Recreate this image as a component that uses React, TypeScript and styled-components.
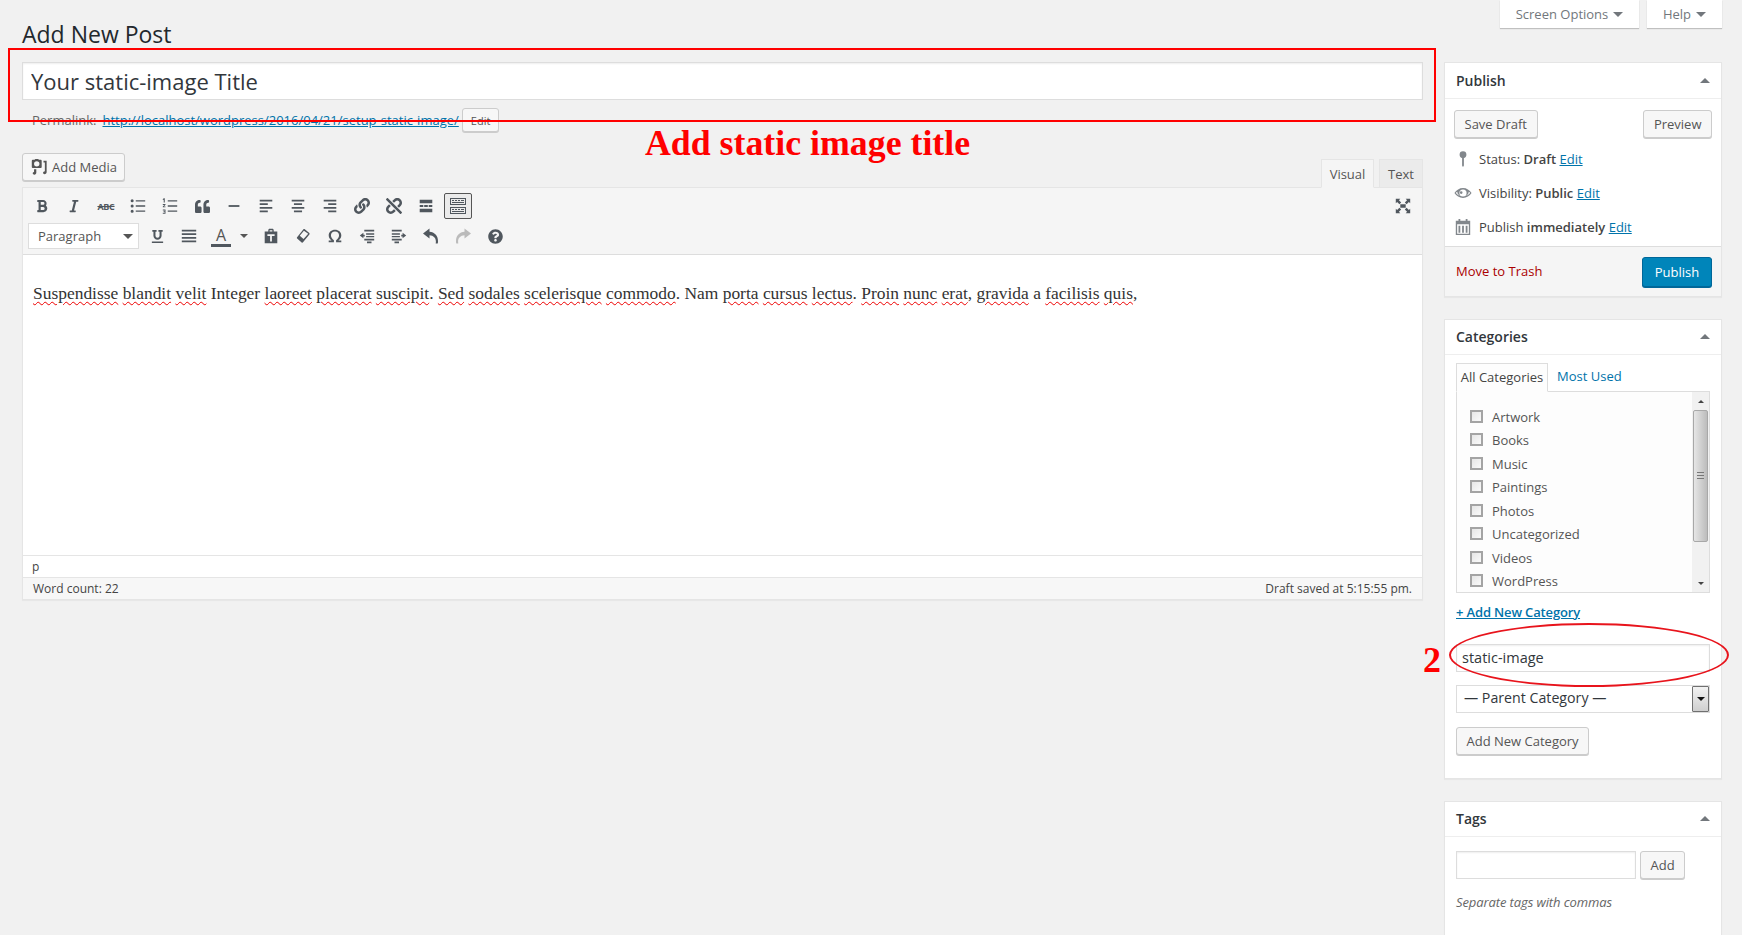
import React from "react";
import styled, { createGlobalStyle } from "styled-components";
import {
  FaBold,
  FaItalic,
  FaQuoteLeft,
  FaLink,
  FaUnlink,
  FaUnderline,
  FaQuestionCircle,
} from "react-icons/fa";

// global
const GlobalStyle = createGlobalStyle`
  html, body {
    margin: 0;
    padding: 0;
    background: #f1f1f1;
    overflow: hidden;
  }
  * {
    box-sizing: border-box;
  }
`;

// page
const Page = styled.div`
  position: relative;
  width: 1742px;
  height: 935px;
  overflow: hidden;
  font-family: "Open Sans", sans-serif;
  font-size: 13px;
  color: #444;
`;

const ScreenMeta = styled.div`
  display: flex;
  justify-content: flex-end;
  gap: 8px;
  height: 28px;
  padding-right: 20px;
`;

const MetaTab = styled.div<{ $width: number }>`
  display: flex;
  align-items: center;
  justify-content: center;
  gap: 5px;
  width: ${(p) => p.$width}px;
  height: 28px;
  background: #fff;
  box-shadow: 0 1px 1px rgba(0, 0, 0, 0.2);
  color: #72777c;
`;

const Caret = styled.span<{ $up?: boolean; $size?: number; $color?: string }>`
  display: inline-block;
  width: 0;
  height: 0;
  border-left: ${(p) => p.$size ?? 5}px solid transparent;
  border-right: ${(p) => p.$size ?? 5}px solid transparent;
  ${(p) => (p.$up ? "border-bottom" : "border-top")}: ${(p) => p.$size ?? 5}px solid
    ${(p) => p.$color ?? "#72777c"};
`;

const Columns = styled.div`
  display: flex;
  gap: 21px;
  padding: 0 20px 0 22px;
`;

const Main = styled.div`
  width: 1401px;
`;

const Heading = styled.h1`
  margin: -8px 0 0;
  height: 42px;
  font-size: 23px;
  font-weight: 400;
  line-height: 29px;
  color: #23282d;
`;

const TitleInput = styled.input`
  display: block;
  width: 100%;
  height: 38px;
  padding: 3px 8px;
  border: 1px solid #ddd;
  outline: 0;
  background: #fff;
  font-family: "Open Sans", sans-serif;
  font-size: 22px;
  color: #32373c;
  box-shadow: inset 0 1px 2px rgba(0, 0, 0, 0.07);
`;

const PermalinkRow = styled.div`
  display: flex;
  align-items: center;
  gap: 3px;
  height: 24px;
  margin-top: 8px;
  padding-left: 10px;
  color: #666;
`;

const PermalinkUrl = styled.a`
  margin-left: 3px;
  color: #0073aa;
  text-decoration: underline;
`;

const TextLink = styled.a<{ $semi?: boolean }>`
  color: #0073aa;
  text-decoration: underline;
  font-weight: ${(p) => (p.$semi ? 600 : 400)};
  letter-spacing: ${(p) => (p.$semi ? "-0.15px" : "0")};
`;

const Strong = styled.span`
  font-weight: 600;
`;

const Button = styled.div<{ $small?: boolean }>`
  display: inline-flex;
  align-items: center;
  justify-content: center;
  gap: 5px;
  height: ${(p) => (p.$small ? 24 : 28)}px;
  padding: 0 ${(p) => (p.$small ? 8 : 9.5)}px;
  border: 1px solid #ccc;
  border-radius: 3px;
  background: #f7f7f7;
  box-shadow: 0 1px 0 #ccc;
  color: #555;
  font-size: ${(p) => (p.$small ? 11 : 13)}px;
  white-space: nowrap;
`;

const MediaButton = styled(Button)`
  gap: 4px;
  padding: 0 7px;
`;

const PrimaryButton = styled(Button)`
  height: 30px;
  width: 70px;
  border-color: #006799;
  background: #0085ba;
  box-shadow: 0 1px 0 #006799;
  color: #fff;
`;

const EditorBar = styled.div`
  display: flex;
  justify-content: space-between;
  align-items: flex-start;
  height: 34px;
  margin-top: 21px;
`;

const EditorTabs = styled.div`
  display: flex;
  gap: 5px;
  margin-top: 6px;
`;

const EditorTab = styled.div<{ $active?: boolean }>`
  display: flex;
  align-items: center;
  justify-content: center;
  width: ${(p) => (p.$active ? 53 : 44)}px;
  height: 29px;
  border: 1px solid #e5e5e5;
  border-bottom-color: ${(p) => (p.$active ? "#f5f5f5" : "#e5e5e5")};
  background: ${(p) => (p.$active ? "#f5f5f5" : "#ebebeb")};
  color: #555;
  position: relative;
  z-index: 1;
`;

const Editor = styled.div`
  border: 1px solid #e5e5e5;
  background: #fff;
  box-shadow: 0 1px 1px rgba(0, 0, 0, 0.04);
`;

const Toolbar = styled.div`
  display: flex;
  flex-direction: column;
  gap: 4px;
  height: 67px;
  padding: 5px 5px 0;
  border-bottom: 1px solid #ddd;
  background: #f5f5f5;
`;

const ToolRow = styled.div`
  display: flex;
  align-items: center;
  gap: 4px;
  height: 26px;
`;

const ToolButton = styled.div<{ $active?: boolean; $dim?: boolean }>`
  display: flex;
  align-items: center;
  justify-content: center;
  width: 28px;
  height: 26px;
  border: 1px solid ${(p) => (p.$active ? "#555" : "transparent")};
  border-radius: 2px;
  background: ${(p) => (p.$active ? "#ebebeb" : "transparent")};
  color: ${(p) => (p.$dim ? "#bbb" : "#50575e")};
`;

const SplitCaret = styled(ToolButton)`
  width: 18px;
  margin-left: -4px;
`;

const FullscreenButton = styled(ToolButton)`
  margin-left: auto;
`;

const StrikeLabel = styled.span`
  font-size: 9px;
  font-weight: 700;
  letter-spacing: -0.3px;
  text-decoration: line-through;
`;

const FormatSelect = styled.div`
  display: flex;
  align-items: center;
  justify-content: space-between;
  width: 111px;
  height: 26px;
  padding: 0 5px 0 9px;
  border: 1px solid #ddd;
  background: #fff;
  color: #555;
`;

const ColorLetter = styled.div`
  display: flex;
  flex-direction: column;
  align-items: center;
  width: 20px;
  font-size: 16px;
  font-weight: 400;
  line-height: 18px;
  color: #555;
  border-bottom: 3px solid #50575e;
`;

const Content = styled.div`
  height: 300px;
  padding: 25px 8px 0 10px;
  font-family: "Liberation Serif", serif;
  font-size: 17.45px;
  line-height: 27px;
  color: #333;
  white-space: nowrap;
`;

const Misspelled = styled.span`
  text-decoration: underline wavy #e00;
  text-decoration-thickness: 1px;
  text-underline-offset: 2px;
`;

const PathRow = styled.div`
  display: flex;
  align-items: center;
  height: 22px;
  padding-left: 9px;
  border-top: 1px solid #e5e5e5;
  font-size: 12px;
  color: #444;
`;

const StatusRow = styled.div`
  display: flex;
  align-items: center;
  justify-content: space-between;
  height: 22px;
  padding: 0 10px;
  border-top: 1px solid #e5e5e5;
  background: #f7f7f7;
  font-size: 12px;
  color: #444;
`;

// sidebar
const Side = styled.div`
  display: flex;
  flex-direction: column;
  gap: 22px;
  width: 278px;
  margin-top: 34px;
`;

const Box = styled.div`
  border: 1px solid #e5e5e5;
  background: #fff;
  box-shadow: 0 1px 1px rgba(0, 0, 0, 0.04);
`;

const BoxHeader = styled.div<{ $height?: number }>`
  display: flex;
  align-items: center;
  justify-content: space-between;
  height: ${(p) => p.$height ?? 35}px;
  padding: 0 11px 1px;
  border-bottom: 1px solid #eee;
  font-size: 14px;
  font-weight: 600;
  color: #32373c;
`;

const PublishActions = styled.div`
  display: flex;
  justify-content: space-between;
  padding: 11px 9px 0;
`;

const MetaList = styled.div`
  display: flex;
  flex-direction: column;
  padding-top: 4px;
`;

const MetaRow = styled.div`
  display: flex;
  align-items: center;
  gap: 7px;
  height: 34px;
  padding-left: 9px;
  white-space: nowrap;
`;

const MetaIcon = styled.span`
  display: flex;
  justify-content: center;
  width: 18px;
  color: #82878c;
`;

const BoxFooter = styled.div`
  display: flex;
  align-items: center;
  justify-content: space-between;
  height: 50px;
  margin-top: 2px;
  padding: 0 9px 0 11px;
  border-top: 1px solid #ddd;
  background: #f5f5f5;
`;

const TrashLink = styled.a`
  margin-top: -2px;
  color: #a00;
`;

const BoxBody = styled.div`
  padding: 8px 11px 0;
`;

const CategoryTabs = styled.div`
  display: flex;
  align-items: center;
  height: 28px;
  padding-bottom: 2px;
`;

const CategoryTab = styled.div`
  display: flex;
  align-items: center;
  justify-content: center;
  width: 92px;
  height: 29px;
  margin-bottom: -3px;
  padding-bottom: 2px;
  border: 1px solid #ddd;
  border-bottom-color: #fdfdfd;
  background: #fdfdfd;
  position: relative;
  z-index: 1;
`;

const PlainTab = styled.a`
  margin-left: 9px;
  color: #0073aa;
`;

const CategoryList = styled.div`
  display: flex;
  height: 202px;
  border: 1px solid #ddd;
  background: #fdfdfd;
`;

const Checklist = styled.div`
  flex: 1;
  padding: 13px 0 0 13px;
  overflow: hidden;
`;

const CheckRow = styled.label`
  display: flex;
  align-items: center;
  gap: 9px;
  height: 23.5px;
  color: #555;
`;

const CheckBox = styled.input`
  appearance: none;
  width: 13px;
  height: 13px;
  margin: 0 0 1px;
  border: 2px solid #a4a4a4;
  background: linear-gradient(135deg, #e6e6e6, #fafafa);
`;

const ScrollTrack = styled.div`
  display: flex;
  flex-direction: column;
  align-items: center;
  width: 17px;
  background: #f1f1f1;
`;

const ScrollArrow = styled.div`
  display: flex;
  align-items: center;
  justify-content: center;
  height: 18px;
`;

const ScrollThumb = styled.div`
  display: flex;
  align-items: center;
  justify-content: center;
  width: 15px;
  height: 132px;
  border: 1px solid #a8a8a8;
  border-radius: 2px;
  background: linear-gradient(90deg, #e6e6e6, #bcbcbc);
`;

const ScrollGrip = styled.div`
  width: 7px;
  height: 8px;
  background: repeating-linear-gradient(#777 0 1px, transparent 1px 3px);
`;

const ScrollSpacer = styled.div`
  flex: 1;
`;

const AddLinkRow = styled.div`
  margin-top: 10px;
  height: 18px;
  line-height: 18px;
`;

const TextField = styled.input<{ $width?: number }>`
  display: block;
  width: ${(p) => (p.$width ? `${p.$width}px` : "100%")};
  height: 28px;
  padding: 0 5px 2px;
  border: 1px solid #ddd;
  outline: 0;
  background: #fff;
  font-family: "Open Sans", sans-serif;
  font-size: 14.5px;
  color: #32373c;
  box-shadow: inset 0 1px 2px rgba(0, 0, 0, 0.07);
`;

const NewCategoryField = styled(TextField)`
  margin-top: 23px;
`;

const ParentSelect = styled.div`
  display: flex;
  align-items: center;
  justify-content: space-between;
  height: 28px;
  margin-top: 13px;
  padding-left: 7px;
  border: 1px solid #ddd;
  background: #fff;
  font-size: 14.2px;
  line-height: 22px;
  color: #32373c;
`;

const ParentLabel = styled.span`
  margin-top: -2px;
`;

const SelectArrow = styled.div`
  display: flex;
  align-items: center;
  justify-content: center;
  width: 17px;
  height: 26px;
  border: 1px solid #707070;
  border-radius: 1px;
  background: linear-gradient(#f2f2f2, #cfcfcf);
`;

const AddCategoryRow = styled.div`
  margin-top: 14px;
  height: 51px;
`;

const TagRow = styled.div`
  display: flex;
  gap: 4px;
  padding-top: 6px;
`;

const TagHint = styled.p`
  margin: 14px 0 0;
  height: 80px;
  font-style: italic;
  letter-spacing: -0.1px;
  color: #666;
`;

// annotations painted over the screenshot
const RedFrame = styled.div`
  position: absolute;
  left: 8px;
  top: 48px;
  width: 1428px;
  height: 74px;
  border: 2px solid #f00;
  pointer-events: none;
`;

const RedLabel = styled.div<{ $left: number; $top: number; $size: number }>`
  position: absolute;
  left: ${(p) => p.$left}px;
  top: ${(p) => p.$top}px;
  font-family: "Liberation Serif", serif;
  font-size: ${(p) => p.$size}px;
  font-weight: 700;
  line-height: 1;
  color: #f00;
  white-space: nowrap;
`;

const RedEllipse = styled.div`
  position: absolute;
  left: 1449px;
  top: 623px;
  width: 280px;
  height: 64px;
  border: 2px solid #e8141c;
  border-radius: 50%;
  pointer-events: none;
`;

// drawn icons
type GlyphProps = { size?: number; flip?: boolean; children: React.ReactNode };

const Glyph = ({ size = 18, flip, children }: GlyphProps) => (
  <svg
    width={size}
    height={size}
    viewBox="0 0 20 20"
    fill="currentColor"
    fillRule="evenodd"
    style={flip ? { transform: "scaleX(-1)" } : undefined}
  >
    {children}
  </svg>
);

const BulletList = () => (
  <Glyph>
    <path d="M3.500 2.500a1.700 1.700 0 110 3.400 1.700 1.700 0 010-3.400zM3.500 8.300a1.700 1.700 0 110 3.400 1.700 1.700 0 010-3.400zM3.500 14.100a1.700 1.700 0 110 3.400 1.700 1.700 0 010-3.400zM7.500 3.500H18V5H7.500zM7.500 9.300H18v1.500H7.500zM7.500 15H18v1.500H7.500z" />
  </Glyph>
);
const NumberList = () => (
  <Glyph>
    <path d="M3 1.500h1.200v4.500H3V3L2 3.300V2.400zM2 7.800h3v.9L3.300 10.500H5v1H2v-.9L3.700 8.800H2zM2 14h3v4.500H2v-1h2v-.8H2.800v-.9H4V15H2zM7.500 3.500H18V5H7.500zM7.500 9.300H18v1.500H7.500zM7.500 15H18v1.500H7.500z" />
  </Glyph>
);
const AlignLeft = () => (
  <Glyph>
    <path d="M3 3h14v2H3zM3 7h9v2H3zM3 11h14v2H3zM3 15h9v2H3z" />
  </Glyph>
);
const AlignCenter = () => (
  <Glyph>
    <path d="M3 3h14v2H3zM5.500 7h9v2h-9zM3 11h14v2H3zM5.500 15h9v2h-9z" />
  </Glyph>
);
const AlignRight = () => (
  <Glyph>
    <path d="M3 3h14v2H3zM8 7h9v2H8zM3 11h14v2H3zM8 15h9v2H8z" />
  </Glyph>
);
const Justify = () => (
  <Glyph>
    <path d="M2 3h16v2H2zM2 7h16v2H2zM2 11h16v2H2zM2 15h16v2H2z" />
  </Glyph>
);
const HorizontalRule = () => (
  <Glyph>
    <path d="M4 9h12v2H4z" />
  </Glyph>
);
const ReadMore = () => (
  <Glyph>
    <path d="M3 3h14v4H3zM3 9h4v2H3zM8 9h4v2H8zM13 9h4v2h-4zM3 13h14v4H3z" />
  </Glyph>
);
const KitchenSink = () => (
  <Glyph size={20}>
    <path d="M2 2h16v7H2zM3 3v5h14V3zM4 4h2v1H4zM7 4h2v1H7zM10 4h2v1h-2zM13 4h3v1h-3zM4 6h12v1H4zM2 11h16v7H2zM3 12v5h14v-5zM4 13h2v1H4zM7 13h2v1H7zM10 13h2v1h-2zM13 13h3v1h-3zM4 15h12v1H4z" />
  </Glyph>
);
const Paste = () => (
  <Glyph>
    <path d="M3 5h4V3.500C7 2.700 7.700 2 8.500 2h3c.8 0 1.500.7 1.500 1.500V5h4v13H3zM8.500 3.500V5h3V3.500zM6 8v2h3v6h2v-6h3V8z" />
  </Glyph>
);
const Eraser = () => (
  <Glyph>
    <path d="M12 2.500l5 4.300c.5.4.5 1 .1 1.500L10 17c-.4.5-1 .5-1.500.1l-5-4.300c-.5-.4-.5-1-.1-1.500L10.500 2.600c.4-.5 1-.5 1.500-.1zM11 4.200L6.400 9.700l4.200 3.600 5.200-5.900z" />
  </Glyph>
);
const Omega = () => (
  <Glyph>
    <path d="M10 3c4 0 7 2.600 7 6.200 0 2.700-1.300 4.500-3.200 5.800H17v2h-5.800v-2.400c1.900-1 3.300-2.900 3.300-5.300 0-2.500-1.800-4.300-4.500-4.300S5.500 6.800 5.500 9.300c0 2.400 1.400 4.300 3.300 5.300V17H3v-2h3.200C4.300 13.700 3 11.900 3 9.200 3 5.600 6 3 10 3z" />
  </Glyph>
);
const Outdent = () => (
  <Glyph>
    <path d="M7 3h11v2H7zM9 7h9v1.500H9zM9 10h9v1.500H9zM7 13h11v2H7zM10 16h5v2h-5zM2 9.500L6 6.500v2h1.500v2H6v2z" />
  </Glyph>
);
const Indent = () => (
  <Glyph>
    <path d="M2 3h11v2H2zM2 7h9v1.500H2zM2 10h9v1.500H2zM2 13h11v2H2zM5 16h5v2H5zM18 9.500l-4-3v2h-1.500v2H14v2z" />
  </Glyph>
);
const Undo = ({ flip }: { flip?: boolean }) => (
  <Glyph size={20} flip={flip}>
    <path d="M2 7.500L8.500 2.500v3.300c5 .3 8.500 3.900 8.500 9.200 0 1 0 1.900-.3 2.500h-2c.1-.6.2-1.200.2-1.900 0-3.600-2.300-6-6.400-6.300v3.200z" />
  </Glyph>
);
const Fullscreen = () => (
  <Glyph>
    <path d="M7 8h6v4H7zM2 2h5L5.500 3.500 8 6 6 8 3.500 5.500 2 7zM18 2v5l-1.500-1.500L14 8l-2-2 2.500-2.500L13 2zM2 18v-5l1.500 1.500L6 12l2 2-2.500 2.500L7 18zM18 18h-5l1.500-1.500L12 14l2-2 2.500 2.500L18 13z" />
  </Glyph>
);
const MediaIcon = () => (
  <Glyph size={18}>
    <path d="M3 2h2l1-1h3l1 1h2c.6 0 1 .4 1 1v7c0 .6-.4 1-1 1H3c-.6 0-1-.4-1-1V3c0-.6.4-1 1-1zM7.500 3.500a3 3 0 100 6 3 3 0 000-6zM15 3h3.500v12.500c0 1.400-1 2.500-2.300 2.500-1 0-1.700-.6-1.700-1.500s.9-1.800 2-1.800V5H15zM4.500 12.500h2.500v4c0 1-.9 2-2 2s-2-.7-2-1.500.9-1.500 1.500-1.500z" />
  </Glyph>
);
const PinIcon = () => (
  <Glyph size={20}>
    <path d="M10 1.500a3.800 3.800 0 013.800 3.800c0 1.900-1.300 3.300-2.800 3.700V17c0 .8-.4 1.500-1 1.500s-1-.7-1-1.500V9C7.500 8.600 6.200 7.200 6.200 5.300A3.800 3.800 0 0110 1.500z" />
  </Glyph>
);
const EyeIcon = () => (
  <Glyph size={20}>
    <path d="M10 4.500c4 0 7.400 2.300 9.500 5.500-2.100 3.200-5.500 5.500-9.500 5.500S2.600 13.200.5 10C2.600 6.800 6 4.500 10 4.500zM10 6a4 4 0 100 8 4 4 0 000-8zM3.500 8.600C2.900 9 2.400 9.500 2 10c1.300 1.500 2.900 2.600 4.700 3.300A5.500 5.500 0 013.500 8.600zM16.500 8.600a5.500 5.500 0 01-3.200 4.700c1.800-.7 3.400-1.800 4.700-3.300-.4-.5-.9-1-1.500-1.400zM8 8a1.500 1.500 0 100 3 1.500 1.500 0 000-3z" />
  </Glyph>
);
const CalendarIcon = () => (
  <Glyph size={20}>
    <path d="M5 1h2v2h6V1h2v2h3v16H2V3h3zM3.500 7v10.500h13V7zM5 8.500h2v8H5zM9 8.500h2v8H9zM13 8.500h2v8h-2z" />
  </Glyph>
);

// data
const categories = [
  "Artwork",
  "Books",
  "Music",
  "Paintings",
  "Photos",
  "Uncategorized",
  "Videos",
  "WordPress",
];

const App: React.FC = () => {
  return (
    <Page>
      <GlobalStyle />
      <ScreenMeta>
        <MetaTab $width={139}>
          Screen Options <Caret />
        </MetaTab>
        <MetaTab $width={75}>
          Help <Caret />
        </MetaTab>
      </ScreenMeta>

      <Columns>
        <Main>
          <Heading>Add New Post</Heading>
          <TitleInput defaultValue="Your static-image Title" />
          <PermalinkRow>
            Permalink:
            <PermalinkUrl>http://localhost/wordpress/2016/04/21/setup-static-image/</PermalinkUrl>
            <Button $small>Edit</Button>
          </PermalinkRow>

          <EditorBar>
            <MediaButton>
              <MediaIcon />
              Add Media
            </MediaButton>
            <EditorTabs>
              <EditorTab $active>Visual</EditorTab>
              <EditorTab>Text</EditorTab>
            </EditorTabs>
          </EditorBar>

          <Editor>
            <Toolbar>
              <ToolRow>
                <ToolButton><FaBold size={14} /></ToolButton>
                <ToolButton><FaItalic size={14} /></ToolButton>
                <ToolButton><StrikeLabel>ABC</StrikeLabel></ToolButton>
                <ToolButton><BulletList /></ToolButton>
                <ToolButton><NumberList /></ToolButton>
                <ToolButton><FaQuoteLeft size={15} /></ToolButton>
                <ToolButton><HorizontalRule /></ToolButton>
                <ToolButton><AlignLeft /></ToolButton>
                <ToolButton><AlignCenter /></ToolButton>
                <ToolButton><AlignRight /></ToolButton>
                <ToolButton><FaLink size={16} /></ToolButton>
                <ToolButton><FaUnlink size={16} /></ToolButton>
                <ToolButton><ReadMore /></ToolButton>
                <ToolButton $active><KitchenSink /></ToolButton>
                <FullscreenButton><Fullscreen /></FullscreenButton>
              </ToolRow>
              <ToolRow>
                <FormatSelect>
                  Paragraph <Caret $color="#555" />
                </FormatSelect>
                <ToolButton><FaUnderline size={13} /></ToolButton>
                <ToolButton><Justify /></ToolButton>
                <ToolButton><ColorLetter>A</ColorLetter></ToolButton>
                <SplitCaret><Caret $size={4} $color="#555" /></SplitCaret>
                <ToolButton><Paste /></ToolButton>
                <ToolButton><Eraser /></ToolButton>
                <ToolButton><Omega /></ToolButton>
                <ToolButton><Outdent /></ToolButton>
                <ToolButton><Indent /></ToolButton>
                <ToolButton><Undo /></ToolButton>
                <ToolButton $dim><Undo flip /></ToolButton>
                <ToolButton><FaQuestionCircle size={15} /></ToolButton>
              </ToolRow>
            </Toolbar>
            <Content>
              <Misspelled>Suspendisse</Misspelled> <Misspelled>blandit</Misspelled>{" "}
              <Misspelled>velit</Misspelled> Integer <Misspelled>laoreet</Misspelled>{" "}
              <Misspelled>placerat</Misspelled> <Misspelled>suscipit</Misspelled>.{" "}
              <Misspelled>Sed</Misspelled> <Misspelled>sodales</Misspelled>{" "}
              <Misspelled>scelerisque</Misspelled> <Misspelled>commodo</Misspelled>. Nam{" "}
              <Misspelled>porta</Misspelled> <Misspelled>cursus</Misspelled>{" "}
              <Misspelled>lectus</Misspelled>. <Misspelled>Proin</Misspelled>{" "}
              <Misspelled>nunc</Misspelled> <Misspelled>erat</Misspelled>,{" "}
              <Misspelled>gravida</Misspelled> a <Misspelled>facilisis</Misspelled>{" "}
              <Misspelled>quis</Misspelled>,
            </Content>
            <PathRow>p</PathRow>
            <StatusRow>
              <span>Word count: 22</span>
              <span>Draft saved at 5:15:55 pm.</span>
            </StatusRow>
          </Editor>
        </Main>

        <Side>
          <Box>
            <BoxHeader $height={36}>
              Publish <Caret $up />
            </BoxHeader>
            <PublishActions>
              <Button>Save Draft</Button>
              <Button>Preview</Button>
            </PublishActions>
            <MetaList>
              <MetaRow>
                <MetaIcon><PinIcon /></MetaIcon>
                <span>Status: <Strong>Draft</Strong> <TextLink>Edit</TextLink></span>
              </MetaRow>
              <MetaRow>
                <MetaIcon><EyeIcon /></MetaIcon>
                <span>Visibility: <Strong>Public</Strong> <TextLink>Edit</TextLink></span>
              </MetaRow>
              <MetaRow>
                <MetaIcon><CalendarIcon /></MetaIcon>
                <span>Publish <Strong>immediately</Strong> <TextLink>Edit</TextLink></span>
              </MetaRow>
            </MetaList>
            <BoxFooter>
              <TrashLink>Move to Trash</TrashLink>
              <PrimaryButton>Publish</PrimaryButton>
            </BoxFooter>
          </Box>

          <Box>
            <BoxHeader>
              Categories <Caret $up />
            </BoxHeader>
            <BoxBody>
              <CategoryTabs>
                <CategoryTab>All Categories</CategoryTab>
                <PlainTab>Most Used</PlainTab>
              </CategoryTabs>
              <CategoryList>
                <Checklist>
                  {categories.map((name) => (
                    <CheckRow key={name}>
                      <CheckBox type="checkbox" />
                      {name}
                    </CheckRow>
                  ))}
                </Checklist>
                <ScrollTrack>
                  <ScrollArrow><Caret $up $size={3} $color="#444" /></ScrollArrow>
                  <ScrollThumb><ScrollGrip /></ScrollThumb>
                  <ScrollSpacer />
                  <ScrollArrow><Caret $size={3} $color="#444" /></ScrollArrow>
                </ScrollTrack>
              </CategoryList>
              <AddLinkRow>
                <TextLink $semi>+ Add New Category</TextLink>
              </AddLinkRow>
              <NewCategoryField defaultValue="static-image" />
              <ParentSelect>
                <ParentLabel>— Parent Category —</ParentLabel>
                <SelectArrow><Caret $size={4} $color="#111" /></SelectArrow>
              </ParentSelect>
              <AddCategoryRow>
                <Button>Add New Category</Button>
              </AddCategoryRow>
            </BoxBody>
          </Box>

          <Box>
            <BoxHeader>
              Tags <Caret $up />
            </BoxHeader>
            <BoxBody>
              <TagRow>
                <TextField $width={180} />
                <Button>Add</Button>
              </TagRow>
              <TagHint>Separate tags with commas</TagHint>
            </BoxBody>
          </Box>
        </Side>
      </Columns>

      <RedFrame />
      <RedLabel $left={645} $top={126} $size={35.8}>Add static image title</RedLabel>
      <RedLabel $left={1423} $top={642} $size={36}>2</RedLabel>
      <RedEllipse />
    </Page>
  );
};

export default App;
